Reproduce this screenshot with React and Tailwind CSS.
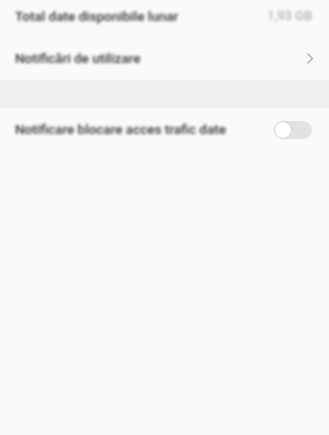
import React from "react";

const Row = ({ label, children }) => (
  <div className="flex items-center justify-between h-[42px] pl-[15px] pr-[17px] pt-[1px]">
    <span className="text-[13.5px] font-medium text-[#333333] blur-[1.4px]">{label}</span>
    {children}
  </div>
);

const App = () => {
  return (
    <div
      className="w-[329px] h-[435px] bg-[#fafafa] overflow-hidden"
      style={{ fontFamily: "Roboto, 'Noto Sans', sans-serif" }}
    >
      <div className="h-[32px] flex items-center justify-between pl-[15px] pr-[17px]">
        <span className="text-[13.5px] font-medium text-[#333333] blur-[1.4px]">
          Total date disponibile lunar
        </span>
        <span className="text-[13px] text-[#a0a0a0] blur-[1.4px]">1,93 GB</span>
      </div>
      <div className="h-[48px] flex items-center justify-between pl-[15px] pr-[15px] pt-[4px]">
        <span className="text-[13.5px] font-medium text-[#333333] blur-[1.4px]">
          Notificări de utilizare
        </span>
        <svg
          xmlns="http://www.w3.org/2000/svg"
          className="w-[8px] h-[13px] blur-[0.4px]"
          viewBox="0 0 8 13"
          fill="none"
          stroke="#a8a8a8"
          strokeWidth={1.2}
        >
          <path d="M1.5 1.5L6.5 6.5L1.5 11.5" />
        </svg>
      </div>
      <div className="h-[28px] bg-[#efefef]" />
      <Row label="Notificare blocare acces trafic date">
        <div className="relative w-[38px] h-[18px] rounded-full bg-[#e2e2e2] blur-[0.5px]">
          <div className="absolute left-[1px] top-[1px] w-[16px] h-[16px] rounded-full bg-white shadow-[0_0_2px_rgba(0,0,0,0.2)]" />
        </div>
      </Row>
    </div>
  );
};

export default App;
